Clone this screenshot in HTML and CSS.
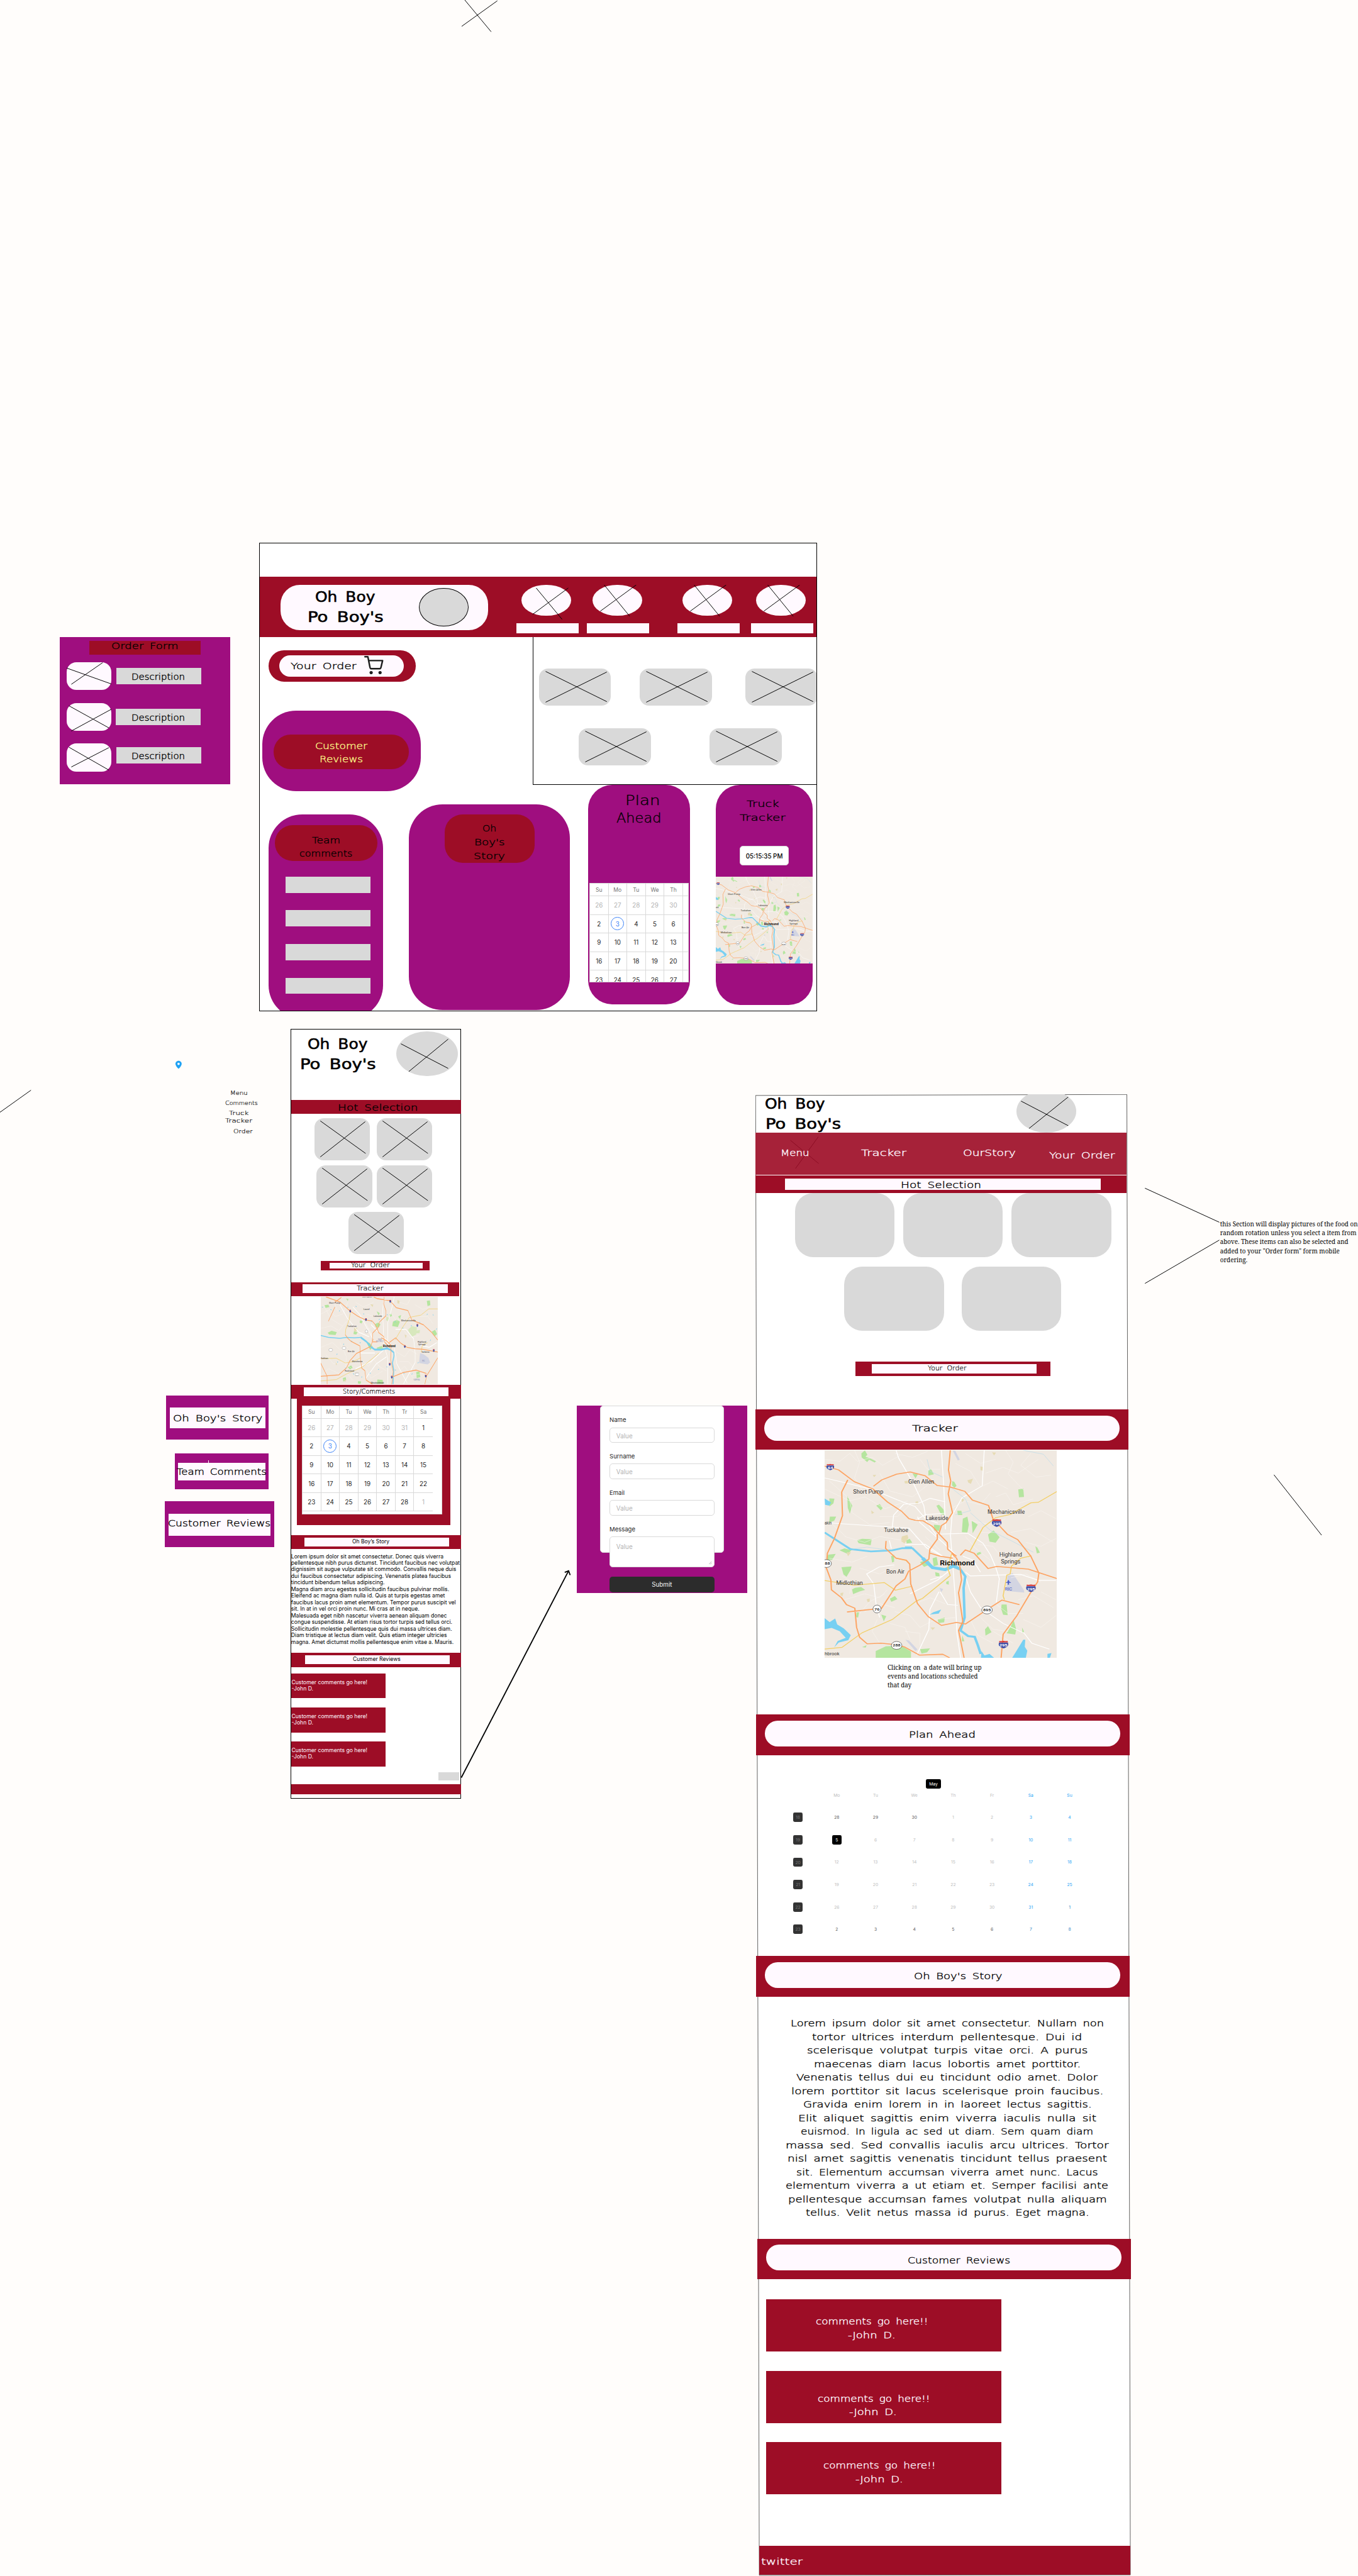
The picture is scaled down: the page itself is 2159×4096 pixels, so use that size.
FILE: index.html
```html
<!DOCTYPE html>
<html lang="en">
<head>
<meta charset="utf-8">
<title>Oh Boy Po Boy's wireframes</title>
<link rel="stylesheet" href="styles.css">
</head>
<body>
<svg class="defs" width="0" height="0" aria-hidden="true">
  <symbol id="x-card" viewBox="0 0 186 95" preserveAspectRatio="none"><path class="hair" d="M17 7.5 175 85.5M175 9 17 87"/></symbol>
  <symbol id="x-tile" viewBox="0 0 143 109"><path class="hair" d="M15 7 132 91M131 9 15 100"/></symbol>
  <symbol id="x-nav" viewBox="0 0 128 81"><path class="hair" d="M30 0 96 81M113 0 20 68"/></symbol>
  <symbol id="interstate" viewBox="0 0 40 38"><path fill="#3f4da5" d="M3 9h34c5 15-2 22-17 29C5 31-2 24 3 9z"/><path fill="#d63232" d="M3 8c1-3 0-5 1-7 5 2 10 1 16-1 6 2 11 3 16 1 1 2 0 4 1 7z"/></symbol>
  <symbol id="map-wide" viewBox="321 284 923 1050" preserveAspectRatio="none">
    <rect x="321" y="284" width="923" height="1050" fill="#f0e9e1"/>
    <g fill="#b5e59f">
      <path d="M467 300l14-15 10 22-8 10 20 8 22 15-5 6-22-14-8 12-22-24zM670 402l22 2-10 22zM733 388l10-10 12 28-22 6zM828 440l8 4 9 20-8 10-10-12zM1090 482l20-4 3 42-20 2zM526 564l14-8 12 20-8 12zM411 515l12 30 8 20-10 40-8-30zM340 527l20 2-4 24-16 16zM342 620l25 0-8 20-20 10zM450 740l20-8 38 2-4 30-48-10zM755 660l26 4-6 28-18-2zM870 630l18-10 6 40-6 40-22-2zM905 640l24 20-20 44zM970 710l22-20 24 34-16 28-24-6zM645 740l14-8 10 20-22 4zM380 790l20-10 28 10-16 18zM335 812l30-4-14 30-20 2zM585 820l12-8 0 36-8 4zM388 876l40-4-4 18-16 34-12-12zM430 988l12-8 24-4 16 14-22 8-26 14zM700 850l30-14 14 24-28 14zM750 830l16-6 6 40-18 8zM760 900l16 6 2 16-16-2zM765 565l10-6 18 24 4 28-14-4zM848 590l16 0 4 22-18 0zM925 805l14-8 6 8-18 12zM1158 770l8 6 10 26-12 4zM580 1035l20-14 10 16-24 14zM546 1115l20 8-10 26zM448 1104l10 0-4 26-8-2zM770 1140l28-10-2 24-22 4zM804 950l10-6 0 20-10-4zM1024 1064l20 0 4 54-18-2-8-30zM1072 1144l10 46-4 26-34-6 14-30zM958 1190l12-16 14 30-24 18zM1105 1180l8 20-6 10zM524 1300l40-24 60-4 40 30 0 32-140 0zM700 1290l40-4-12 20-22 6zM868 1220l8 30-10 0zM470 1280l18-10-4 12z"/>
    </g>
    <g fill="#e6dbb4"><path d="M628 720l22-8 4 16-16 28-14-14zM888 436l22-8-8 26-10-6zM940 366l10 2 0 20-10-4zM986 294l16 2-8 14zM682 544l10-2 0 14-10 0zM864 530l12 2-8 16zM506 588l12 12-10 6zM638 440l14-2 0 14-12 0zM488 1038l12-4 0 16-8 2zM384 1006l12-2-4 18-8-4zM742 1180l18 0-10 14zM408 800l18 0-12 20zM512 410l14-2-8 12z"/></g>
    <path fill="#d3d5e2" d="M1048 912l20-6 44 84 2 14-72-8zM830 286l10 0 18 46-8 4zM642 1242l14 4 34 46-8 8zM778 980l14 6-8 16z"/>
    <g class="roads thin"><path d="M321 330l60 10 40-40 30 40 60-20 40 40 70-50M321 480l100 60 60-20 80 60 90-40M340 440l80 90 10 70 70 60 80-10M440 284l20 60-20 80 40 80M540 400l40 90 90 30 60-60M700 330l30 50 50 0M840 350l60 40 40 80 50-30 60 40M960 400l70-30 60 30 80-70M1000 520l40-20 30 60 80-30M1130 620l50-30 60 40M1060 700l80-20 90 70M1120 750l60 20 60-40M400 720l80 30 60-30 90 20M345 650l60 70M490 820l-60 30-90-20M460 880l80 30 60-40M400 1040l80-30 60 20 30-40M420 1010l10-60-40-30M530 1140l-20 60 30 60M480 1100l60-40 60 20M560 1010l-60 40-40 60M600 1100l60 20 40 60M580 1160l60 20 20 60M680 1060l60-30 60 30M700 1180l60-40 80-10M900 640l80 20 60-30M930 760l60 10 30 50 60-20M880 720l40 60 60 60M1060 930l60-20 60 40M1090 1040l60-20 80 60M940 1130l50 60 60 10M900 1140l30 80 60 40M1000 1060l50 50 60 0M990 1200l80 60M1110 1140l70 40 60-60M1180 1000l60 40M1000 700l-60 0M720 720l60 70M680 720l60 60M660 560l-50 60-70 0M820 580l60-40 60 20 40-60M640 1200l60 10 0 60M600 300l70 20 60-30M880 300l60 50 60-20M1040 284l30 60-20 60 60 80M1140 300l-40 60 60 60 60-10"/></g>
    <g class="roads"><path d="M321 424l80 24 110 35 100 52 70 34 40 60 50 24M605 284l10 40 60 130 40 110 10 80 40 70M785 284l10 200 6 200M690 620l10 30 90 100 50 60M321 650l260 22 75 6 70 100 60 40M590 672l5-60 40-55 60-5 45-25 60 18M955 284l-8 180-80 60-40 90-6 100 18 300 8 200 20 170M780 708l110-4 60 50 30 60 20 60 15 60-12 120M540 1130l-14-60-10-110-28-50 50-36 60-10M578 740l8 40M660 1010l110-70 50-50M740 940l50-20M780 1000l30 64 40 4M775 1000l-36 90-4 100-48 130M880 900l20 20 200-8 70 30 70 0M880 920l20 80 40 80 90 80 84 50 30 50 70 30M680 640l40-30 80-8M640 760l80 0 70 60M870 820l40 20 30 60"/></g>
    <path fill="none" stroke="#78d0f2" stroke-width="9" d="M321 700l102 84 82 12 85-6 40-11 40 1 45 55"/>
    <path fill="none" stroke="#78d0f2" stroke-width="15" d="M710 830l40 48 50 10 32-18 28 15"/>
    <path fill="none" stroke="#78d0f2" stroke-width="10" d="M858 882l22 40-7 58 4 150-16 66 30 28 26 4 12 40 12 46M640 776l28 0"/>
    <path fill="#78d0f2" d="M321 1133l20 20 22-18 8 30 26 20 28 34-10 26-38 12-18 24 14-32 32-16-24-34-32-16-28 6zM1066 1334l30-62 14-30 8 0-2 36 10 20-6 36zM942 1334l2-34 12 22 20-8 18 20zM1206 1334l0-20 16-4-6 24zM321 528l26 20-8 16-16-4zM736 1118l16-14 32-14-10 20-30 4z"/>
    <g fill="none" stroke="#bcdcea" stroke-width="2"><path d="M728 330l12 60 50 30M820 470l60 60 20 60-60 20M900 600l80 90 80 50 90 60M430 784l60-10 80 14M1110 284l80 20 40 60"/></g>
    <g class="yel" stroke-width="4"><path d="M1244 492l-74 55-30 3-42 30-38 28-60 17-50 50-53 122M321 943l119 24 118-14 44 39 66-20M321 1290l69-9 80-74 120-67 95-93 25-14 110-115-10-38 15-70M1142 818l-42 12-37 40-5 40-13 5-15 105 5 20M605 830l40 12 14 18"/></g>
    <g class="org" stroke-width="5"><path d="M321 364l55 19 63 60 74 37 58 66 56 47 29 37 24 8 32 3 38 29 23 34 35 46 2 35 35 35M515 466l33-32 59-29 54-11 59 19 48 49 52 8 58 22 30 44 64 27 18 69 58 78 40 26 52 84 32 85-5 45-26 50-56 120-55 95-8 119M820 284l-7 100 9 56-10 65 17 95-26 50-18 15-10 40M413 434l-24 61 3 120-32 115-28 75-4 75 18 60 2 50 40 40 20 35 33 18 7 97 12 50 30 33 55-3 62 8 33 12 57 40 93-4 28 18M410 1102l118-16 19-2 58-114 35-35 15-40 45-30 35-30 4-50 30-52-1-25M565 743l-2 37 42 50 40 10 14 20 4 100 27 100 42 65 53 45 60-15 35 8 86-73 59-48 70 23M860 815l20-27 35 17 55 77 35-10 125 13 114 48M825 805l20 25 13 40 7 70-12 65 17 145-17 45 22 139M737 803l43 17 50 10"/></g>
    <g class="place">
      <text x="653" y="454" textLength="103" lengthAdjust="spacingAndGlyphs">Glen Allen</text>
      <text x="434" y="504" textLength="120" lengthAdjust="spacingAndGlyphs">Short Pump</text>
      <text x="968" y="605" textLength="148" lengthAdjust="spacingAndGlyphs">Mechanicsville</text>
      <text x="722" y="638" textLength="90" lengthAdjust="spacingAndGlyphs">Lakeside</text>
      <text x="557" y="698" textLength="96" lengthAdjust="spacingAndGlyphs">Tuckahoe</text>
      <text x="1015" y="821" textLength="90" lengthAdjust="spacingAndGlyphs">Highland</text>
      <text x="1021" y="857" textLength="78" lengthAdjust="spacingAndGlyphs">Springs</text>
      <text x="566" y="906" textLength="72" lengthAdjust="spacingAndGlyphs">Bon Air</text>
      <text x="367" y="966" textLength="106" lengthAdjust="spacingAndGlyphs">Midlothian</text>
      <text x="321" y="660" textLength="28" lengthAdjust="spacingAndGlyphs" font-size="22">akin</text>
      <text x="321" y="1322" textLength="59" lengthAdjust="spacingAndGlyphs" font-size="24">hbrook</text>
      <text x="779" y="866" textLength="138" lengthAdjust="spacingAndGlyphs" class="city">Richmond</text>
      <text x="1037" y="993" textLength="29" lengthAdjust="spacingAndGlyphs" fill="#4a5cc5" font-size="24">RIC</text>
    </g>
    <path fill="#4a5cc5" d="M1049 941h4l1 7 7 5v2l-7-1-1 8 2 2h-8l2-2-1-8-7 1v-2l7-5z"/>
    <use href="#interstate" x="327" y="350" width="33" height="38"/><use href="#interstate" x="984" y="632" width="41" height="40"/><use href="#interstate" x="1120" y="962" width="41" height="40"/><use href="#interstate" x="1011" y="1247" width="41" height="40"/>
    <g fill="#fff" stroke="#444" stroke-width="2"><ellipse cx="328" cy="857" rx="20" ry="20"/><ellipse cx="529" cy="1087" rx="16" ry="20"/><ellipse cx="966" cy="1092" rx="21" ry="20"/><ellipse cx="607" cy="1271" rx="21" ry="20"/></g>
    <g class="num"><text class="inv" x="344" y="378">64</text><text class="inv" x="1005" y="662">295</text><text class="inv" x="1141" y="992">295</text><text class="inv" x="1031" y="1276">295</text><text x="332" y="864">88</text><text x="529" y="1094">76</text><text x="966" y="1099">895</text><text x="607" y="1278">288</text></g>
  </symbol>
  <symbol id="map-close" viewBox="291 1157 906 369" preserveAspectRatio="none">
    <rect x="291" y="1157" width="906" height="369" fill="#f0e9e1"/>
    <path fill="#b5e59f" d="M345 1308l30-8 40 6-10 12-50-2zM320 1192l30-2 8 10-30 4zM712 1272l24-6 18 8-14 12-24-2zM850 1262l30-8 24 8-16 22-44-4zM890 1240l22-6-6 20zM1112 1174l24-2 4 20-22 4zM1150 1304l26-8 16 18-20 10zM1030 1474l26-2 6 24-28 4zM640 1344l30 8 24 16-20 14zM724 1372l40-8 12 14-44 4zM500 1454l26-8 12 10-20 8zM462 1500l22-4 4 12-22 6zM548 1302l28 4-10 10-22-2zM486 1164l20 2-6 8zM724 1218l24 8-10 10zM580 1512l24 2-6 10-20-2zM820 1232l16-4 8 10-20 4zM730 1506l40 2 4 16-50 0zM596 1256l20 4-10 10-14-4z"/>
    <path fill="#d8e8bd" d="M966 1296l30-16 40 6-6 30-36 10zM1010 1302l50-6-4 14-46 2zM800 1240l22 6-8 14-18-4z"/>
    <path fill="#e6dbb4" d="M550 1284l24 4-8 16-18-2zM884 1170l18 4-4 12-14-2zM674 1188l24 2-6 10zM940 1316l16 4-8 12zM468 1504l20 4-8 8zM404 1434l14 4-8 8z"/>
    <path fill="#d3d5e2" d="M1060 1394l30 6 34 14 14 20-20 8-66-6z"/>
    <g class="roads thin"><path d="M291 1230l70-20 40 30 60-10 40-50M310 1190l60 60 90 30M380 1157l40 60 60 0M291 1290l80-10 60 20 60-40M291 1370l90-20 60 30 60-10M330 1400l60 40 80-10 60 30M440 1350l50 60-10 60 60 40M291 1490l60-30 80 20M600 1420l60 30 40-30 60 40M640 1460l40 40 90-30M720 1440l80 30M880 1390l60 20 40-30 60 20M900 1430l70 0 60 40M880 1480l60-30 80 60M940 1230l-60 30-40-30M900 1180l60 10 30-30M1020 1190l60 20 60-10M1060 1240l60 0 40 30M920 1290l60 40 70-10M1070 1350l60 20 60-10M560 1180l60 20 80-20M640 1230l70 10 70-10M560 1320l80-20 60-20M640 1270l60 60M600 1230l90 90M1000 1490l80-10 60 40"/></g>
    <g class="roads"><path d="M435 1186l60 60 90 60 80 20M540 1200l50 30 100 100M780 1157l-10 60 10 140 30 60 0 109M860 1157l-20 50-30 60 0 100M680 1274l90 50 60 30M870 1294l80 0 60 40 12 60 0 40-60 60-30 30M860 1370l20 70 80 80M560 1460l120-30 120-60M640 1500l80-60 80-30M1050 1360l80 10 60-20M600 1394l110 0"/></g>
    <g fill="none" stroke="#78d0f2"><path stroke-width="4" d="M291 1320l60 8 88 4 52-4 60 2 50-2"/><path stroke-width="8" d="M600 1328l45 18 35 22 30 12 50 0 50-6"/><path stroke-width="7" d="M800 1374l30 6 26 12 2 14-12 30 10 30-6 60"/></g>
    <path fill="none" stroke="#78d0f2" stroke-width="3" stroke-dasharray="7 60" d="M300 1200l120 20 130-30 150 80 100-40 120 60 130-20 100-60 40 80-200 200-200-40-200 50-200-80 100-80 200 20"/>
    <g class="yel" stroke-width="2.5"><path d="M1197 1208l-70 0-60 26-90 10-60 48-50 46M520 1225l-10 30-26 40-2 20M291 1418l120-2 70 20 60-6 60-16M291 1512l120-6 80-24 120-28 130-60M1068 1390l10-30 40-10"/></g>
    <g class="org" stroke-width="3.5"><path d="M330 1157l110 22 78 38 60 22 60 16 50 4 20 12 20 20 10 16 40 18 8 24 40 22M700 1157l30 8 96 8 50 30 90 12 30 40 90 20 60 30 51 34M782 1157l-4 30 18 30 0 20-50 26-12 24-40 22-4 38 40 0M480 1316l20 16 24 12 70 20 4 54 10 40 24 10 10 40 50 18M291 1492l140-6 60-30 26-30 50-30 110-30 20-30M820 1350l50-20 40 22 50 18 60 6 60 2 117 12M760 1330l40 12 36 20-4 60 20 50-12 54M1197 1414l-40 36-46 40-14 36M850 1494l80-18 100-10 80 14M400 1200l-50 60M400 1180l50-20M290 1436l50 56 0 34"/></g>
    <g class="place small">
      <text x="354" y="1185" textLength="88" lengthAdjust="spacingAndGlyphs">Short Pump</text><text x="612" y="1160" textLength="76" lengthAdjust="spacingAndGlyphs">Glen Allen</text><text x="621" y="1214" textLength="48" lengthAdjust="spacingAndGlyphs">Laurel</text><text x="699" y="1241" textLength="66" lengthAdjust="spacingAndGlyphs">Lakeside</text><text x="914" y="1261" textLength="112" lengthAdjust="spacingAndGlyphs">Mechanicsville</text><text x="496" y="1284" textLength="72" lengthAdjust="spacingAndGlyphs">Tuckahoe</text><text x="1041" y="1350" textLength="66" lengthAdjust="spacingAndGlyphs">Highland</text><text x="1045" y="1361" textLength="58" lengthAdjust="spacingAndGlyphs">Springs</text><text x="1072" y="1392" textLength="62" lengthAdjust="spacingAndGlyphs">Sandston</text><text x="501" y="1390" textLength="53" lengthAdjust="spacingAndGlyphs">Bon Air</text><text x="292" y="1420" textLength="56" lengthAdjust="spacingAndGlyphs">llothian</text><text x="534" y="1432" textLength="82" lengthAdjust="spacingAndGlyphs">Manchester</text><text x="478" y="1473" textLength="72" lengthAdjust="spacingAndGlyphs">Rockwood</text><text x="678" y="1524" textLength="103" lengthAdjust="spacingAndGlyphs">Meadowbrook</text>
      <text x="772" y="1368" textLength="98" lengthAdjust="spacingAndGlyphs" class="city">Richmond</text>
      <text x="734" y="1340" textLength="28" lengthAdjust="spacingAndGlyphs" class="area-name">FAN</text><text x="718" y="1348" textLength="62" lengthAdjust="spacingAndGlyphs" class="area-name">DISTRICT</text><text x="1008" y="1511" textLength="50" lengthAdjust="spacingAndGlyphs" class="area-name">VARINA</text><text x="1077" y="1431" textLength="21" lengthAdjust="spacingAndGlyphs" class="area-name">RIC</text>
    </g>
    <use href="#interstate" x="507" y="1211" width="24" height="13"/><use href="#interstate" x="629" y="1247" width="24" height="13"/><use href="#interstate" x="815" y="1170" width="28" height="13"/><use href="#interstate" x="1025" y="1271" width="28" height="13"/><use href="#interstate" x="930" y="1360" width="24" height="13"/><use href="#interstate" x="1154" y="1377" width="24" height="13"/><use href="#interstate" x="813" y="1435" width="24" height="13"/><use href="#interstate" x="829" y="1489" width="24" height="13"/><use href="#interstate" x="1090" y="1485" width="28" height="13"/>
    <g fill="#fff" stroke="#555" stroke-width="1"><ellipse cx="645" cy="1303" rx="11" ry="6"/><ellipse cx="368" cy="1381" rx="15" ry="6"/><ellipse cx="471" cy="1373" rx="15" ry="6"/><rect x="559" y="1478" width="28" height="11"/></g>
  </symbol>
</svg>

<main class="board">

  <svg class="loose" viewBox="0 0 3506 6651" aria-hidden="true">
    <path class="hair" d="M1192 68 1284 2M1200 0 1268 82M0 2872 80 2815M2956 3068 3148 3156M2956 3314 3148 3202M3289 3808 3412 3964"/>
    <path fill="none" stroke="#000" stroke-width="3" d="M1191 4590 1468 4056M1458 4060l10-4 4 11"/>
    <path fill="#1fa2f4" d="M461 2739c5 0 8 4 8 8 0 6-8 13-8 13s-8-7-8-13c0-4 3-8 8-8z"/><circle cx="461" cy="2747" r="3" fill="#fff"/>
  </svg>

  <nav class="sitemap hand">
    <span class="s1"><span class="fit" data-fit="45">Menu</span></span>
    <span class="s2"><span class="fit" data-fit="84">Comments</span></span>
    <span class="s3"><span class="fit" data-fit="51">Truck</span></span>
    <span class="s4"><span class="fit" data-fit="70">Tracker</span></span>
    <span class="s5"><span class="fit" data-fit="50">Order</span></span>
  </nav>

  <!-- Order form -->
  <section class="order-form hand">
    <h2><span class="fit" data-fit="173">Order Form</span></h2>
    <div class="item"><svg viewBox="0 0 115 72"><path class="hair" d="M0 15 115 56M93 1 12 57"/></svg><p><span class="fit" data-fit="138">Description</span></p></div>
    <div class="item second"><svg viewBox="0 0 115 72"><path class="hair" d="M6 7 109 64M115 16 12 72"/></svg><p><span class="fit" data-fit="138">Description</span></p></div>
    <div class="item third"><svg viewBox="0 0 115 72"><path class="hair" d="M6 10 109 69M109 11 12 61"/></svg><p><span class="fit" data-fit="138">Description</span></p></div>
  </section>

  <!-- Desktop -->
  <section class="desktop hand">
    <header class="top">
      <div class="logo">
        <h1 class="brand"><span class="in"><span class="fit" data-fit="155">Oh Boy</span></span><span><span class="fit" data-fit="196">Po Boy's</span></span></h1>
        <div class="disc"></div>
      </div>
      <div class="link l1"><svg viewBox="0 0 128 81"><path class="hair" d="M38 8 105 89M121 8 29 76"/></svg><i></i></div>
      <div class="link l2"><svg><use href="#x-nav"/></svg><i></i></div>
      <div class="link l3"><svg><use href="#x-nav"/></svg><i></i></div>
      <div class="link l4"><svg><use href="#x-nav"/></svg><i></i></div>
    </header>
    <div class="middle">
      <div class="side">
        <div class="order-pill"><div class="inner"><span class="fit" data-fit="170">Your Order</span>
          <svg class="cart" viewBox="0 0 50 47" width="50" height="47"><path fill="none" stroke="#1e1e1e" stroke-width="4" stroke-linecap="round" stroke-linejoin="round" d="M2 2h7.500l5.500 27.500q.8 3.500 4 3.500h20q3.500 0 4.300-3.500L47.500 12H12"/><circle cx="18" cy="43" r="4.200" fill="#1e1e1e"/><circle cx="41" cy="43" r="4.200" fill="#1e1e1e"/></svg></div></div>
        <div class="review-card"><div class="pill"><p><span class="fit" data-fit="135">Customer</span></p><p><span class="fit" data-fit="112">Reviews</span></p></div></div>
      </div>
      <div class="menu">
        <div class="row r1"><svg><use href="#x-card"/></svg><svg><use href="#x-card"/></svg><svg><use href="#x-card"/></svg></div>
        <div class="row r2"><svg><use href="#x-card"/></svg><svg><use href="#x-card"/></svg></div>
      </div>
    </div>
    <div class="bottom">
      <div class="team"><div class="pill"><p><span class="fit" data-fit="73">Team</span></p><p><span class="fit" data-fit="137">comments</span></p></div><i></i><i></i><i></i><i></i></div>
      <div class="story"><div class="pill"><p><span class="fit" data-fit="36">Oh</span></p><p><span class="fit" data-fit="79">Boy's</span></p><p><span class="fit" data-fit="81">Story</span></p></div></div>
      <div class="plan"><p class="a"><span class="fit" data-fit="90">Plan</span></p><p class="b"><span class="fit" data-fit="116">Ahead</span></p>
        <div class="cal cut">
          <b>Su</b><b>Mo</b><b>Tu</b><b>We</b><b>Th</b><b></b><b></b>
          <s>26</s><s>27</s><s>28</s><s>29</s><s>30</s><s></s><s></s>
          <span>2</span><span class="today">3</span><span>4</span><span>5</span><span>6</span><span></span><span></span>
          <span>9</span><span>10</span><span>11</span><span>12</span><span>13</span><span></span><span></span>
          <span>16</span><span>17</span><span>18</span><span>19</span><span>20</span><span></span><span></span>
          <span>23</span><span>24</span><span>25</span><span>26</span><span>27</span><span></span><span></span>
        </div>
      </div>
      <div class="truck"><p><span class="fit" data-fit="84">Truck</span></p><p><span class="fit" data-fit="118">Tracker</span></p>
        <time>05:15:35 PM</time>
        <svg class="map"><use href="#map-wide"/></svg>
      </div>
    </div>
  </section>

  <!-- Tags -->
  <div class="tag t1 hand"><p><span class="fit" data-fit="231">Oh Boy's Story</span></p></div>
  <div class="tag t2 hand"><i></i><p><span class="fit" data-fit="232">Team Comments</span></p></div>
  <div class="tag t3 hand"><p><span class="fit" data-fit="265">Customer Reviews</span></p></div>

  <!-- Phone -->
  <section class="phone hand">
    <header>
      <h1 class="brand"><span class="in"><span class="fit" data-fit="155">Oh Boy</span></span><span><span class="fit" data-fit="196">Po Boy's</span></span></h1>
      <svg viewBox="0 0 158 116"><path class="hair" d="M12 32 134 95.500M134 20 32 104"/></svg>
    </header>
    <h2 class="hot"><span class="fit" data-fit="207">Hot Selection</span></h2>
    <div class="tiles a"><svg><use href="#x-tile"/></svg><svg><use href="#x-tile"/></svg></div>
    <div class="tiles b"><svg><use href="#x-tile"/></svg><svg><use href="#x-tile"/></svg></div>
    <div class="tiles c"><svg><use href="#x-tile"/></svg></div>
    <div class="bar order"><p><span class="fit" data-fit="100">Your Order</span></p></div>
    <div class="bar tracker"><p><span class="fit" data-fit="69">Tracker</span></p></div>
    <svg class="map"><use href="#map-close"/></svg>
    <div class="bar comments"><p><span class="fit" data-fit="135">Story/Comments</span></p></div>
    <div class="cal-block"><div class="cal-card"><div class="cal">
      <b>Su</b><b>Mo</b><b>Tu</b><b>We</b><b>Th</b><b>Tr</b><b>Sa</b>
      <s>26</s><s>27</s><s>28</s><s>29</s><s>30</s><s>31</s><span>1</span>
      <span>2</span><span class="today">3</span><span>4</span><span>5</span><span>6</span><span>7</span><span>8</span>
      <span>9</span><span>10</span><span>11</span><span>12</span><span>13</span><span>14</span><span>15</span>
      <span>16</span><span>17</span><span>18</span><span>19</span><span>20</span><span>21</span><span>22</span>
      <span>23</span><span>24</span><span>25</span><span>26</span><span>27</span><span>28</span><s>1</s>
    </div></div></div>
    <div class="bar plain storybar"><p><span class="fit" data-fit="96">Oh Boy’s Story</span></p></div>
    <p class="copy">Lorem ipsum dolor sit amet consectetur. Donec quis viverra<br>pellentesque nibh purus dictumst. Tincidunt faucibus nec volutpat<br>dignissim sit augue vulputate sit commodo. Convallis neque duis<br>dui faucibus consectetur adipiscing. Venenatis platea faucibus<br>tincidunt bibendum tellus adipiscing.<br>Magna diam arcu egestas sollicitudin faucibus pulvinar mollis.<br>Eleifend ac magna diam nulla id. Quis at turpis egestas amet<br>faucibus lacus proin amet elementum. Tempor purus suscipit vel<br>sit. In at in vel orci proin nunc. Mi cras at in neque.<br>Malesuada eget nibh nascetur viverra aenean aliquam donec<br>congue suspendisse. At etiam risus tortor turpis sed tellus orci.<br>Sollicitudin molestie pellentesque quis dui massa ultrices diam.<br>Diam tristique at lectus diam velit. Quis etiam integer ultricies<br>magna. Amet dictumst mollis pellentesque enim vitae a. Mauris.</p>
    <div class="bar plain reviewbar"><p><span class="fit" data-fit="123">Customer Reviews</span></p></div>
    <div class="quotes">
      <blockquote>Customer comments go here!<br>-John D.</blockquote>
      <blockquote>Customer comments go here!<br>-John D.</blockquote>
      <blockquote>Customer comments go here!<br>-John D.</blockquote>
    </div>
    <div class="button"></div>
    <footer></footer>
  </section>

  <!-- Contact form -->
  <form class="contact">
    <div class="sheet">
      <label>Name</label><div class="field">Value</div>
      <label>Surname</label><div class="field">Value</div>
      <label>Email</label><div class="field">Value</div>
      <label>Message</label><div class="field area">Value<svg viewBox="0 0 8 8" width="8" height="8"><path d="M7 0 0 7M7 4 4 7" stroke="#888" fill="none"/></svg></div>
      <div class="submit">Submit</div>
    </div>
  </form>

  <!-- Tablet -->
  <section class="tablet hand">
    <svg class="outline" viewBox="0 0 969 3825"><path fill="#fff" stroke="#000" d="M.5 3 959 .5 968 3823 10 3824z"/></svg>
    <header>
      <h1 class="brand"><span class="oh"><span class="fit" data-fit="155">Oh Boy</span></span><span class="po"><span class="fit" data-fit="195">Po Boy's</span></span></h1>
      <svg viewBox="0 0 154 110"><path class="hair" d="M12 29 134 92.600M134 18 32 100"/></svg>
    </header>
    <nav>
      <svg viewBox="0 0 75 84"><path d="M1 10 74 70M73 1 14 83" stroke="#8a0b22" stroke-width="1.500" fill="none"/></svg>
      <span class="n1"><span class="fit" data-fit="74">Menu</span></span><span class="n2"><span class="fit" data-fit="117">Tracker</span></span><span class="n3"><span class="fit" data-fit="136">OurStory</span></span><span class="n4"><span class="fit" data-fit="170">Your Order</span></span>
    </nav>
    <div class="hot"><p><span class="fit" data-fit="208">Hot Selection</span></p></div>
    <div class="tiles a"><i></i><i></i><i></i></div>
    <div class="tiles b"><i></i><i></i></div>
    <div class="bar"><p><span class="fit" data-fit="100">Your Order</span></p></div>
    <div class="band b1"><p><span class="fit" data-fit="118">Tracker</span></p></div>
    <svg class="map"><use href="#map-wide"/></svg>
    <div class="note day"><span class="fit" data-fit="243">Clicking on&nbsp; a date will bring up</span><span class="fit" data-fit="233">events and locations scheduled</span><span class="fit" data-fit="62">that day</span></div>
    <div class="band b2"><p><span class="fit" data-fit="172">Plan Ahead</span></p></div>
    <div class="month">May</div>
    <div class="weeks head"><b></b><span>Mo</span><span>Tu</span><span>We</span><span>Th</span><span>Fr</span><em>Sa</em><em>Su</em></div>
    <div class="weeks">
      <b>18</b><u>28</u><u>29</u><u>30</u><span>1</span><span>2</span><em>3</em><em>4</em>
      <b>19</b><strong>5</strong><span>6</span><span>7</span><span>8</span><span>9</span><em>10</em><em>11</em>
      <b>20</b><span>12</span><span>13</span><span>14</span><span>15</span><span>16</span><em>17</em><em>18</em>
      <b>21</b><span>19</span><span>20</span><span>21</span><span>22</span><span>23</span><em>24</em><em>25</em>
      <b>22</b><span>26</span><span>27</span><span>28</span><span>29</span><span>30</span><em>31</em><em class="off">1</em>
      <b>23</b><u>2</u><u>3</u><u>4</u><u>5</u><u>6</u><em class="off">7</em><em class="off">8</em>
    </div>
    <div class="band b3"><p><span class="fit" data-fit="228">Oh Boy's Story</span></p></div>
    <div class="lorem">
      <p><span class="fit" data-fit="809">Lorem ipsum dolor sit amet consectetur. Nullam non</span></p>
      <p><span class="fit" data-fit="697">tortor ultrices interdum pellentesque. Dui id</span></p>
      <p><span class="fit" data-fit="725">scelerisque volutpat turpis vitae orci. A purus</span></p>
      <p><span class="fit" data-fit="689">maecenas diam lacus lobortis amet porttitor.</span></p>
      <p><span class="fit" data-fit="778">Venenatis tellus dui eu tincidunt odio amet. Dolor</span></p>
      <p><span class="fit" data-fit="806">lorem porttitor sit lacus scelerisque proin faucibus.</span></p>
      <p><span class="fit" data-fit="745">Gravida enim lorem in in laoreet lectus sagittis.</span></p>
      <p><span class="fit" data-fit="770">Elit aliquet sagittis enim viverra iaculis nulla sit</span></p>
      <p><span class="fit" data-fit="755">euismod. In ligula ac sed ut diam. Sem quam diam</span></p>
      <p><span class="fit" data-fit="834">massa sed. Sed convallis iaculis arcu ultrices. Tortor</span></p>
      <p><span class="fit" data-fit="825">nisl amet sagittis venenatis tincidunt tellus praesent</span></p>
      <p><span class="fit" data-fit="779">sit. Elementum accumsan viverra amet nunc. Lacus</span></p>
      <p><span class="fit" data-fit="833">elementum viverra a ut etiam et. Semper facilisi ante</span></p>
      <p><span class="fit" data-fit="823">pellentesque accumsan fames volutpat nulla aliquam</span></p>
      <p><span class="fit" data-fit="732">tellus. Velit netus massa id purus. Eget magna.</span></p>
    </div>
    <div class="band b4"><p><span class="fit" data-fit="265">Customer Reviews</span></p></div>
    <div class="quotes">
      <blockquote class="q1"><span class="fit" data-fit="290">comments go here!!</span><span class="fit by" data-fit="123">-John D.</span></blockquote>
      <blockquote class="q2"><span class="fit" data-fit="290">comments go here!!</span><span class="fit by" data-fit="123">-John D.</span></blockquote>
      <blockquote class="q3"><span class="fit" data-fit="290">comments go here!!</span><span class="fit by" data-fit="123">-John D.</span></blockquote>
    </div>
    <footer><span class="fit" data-fit="107">twitter</span></footer>
  </section>

  <aside class="note feed">this Section will display pictures of the food on<br>random rotation unless you select a item from<br>above. These items can also be selected and<br>added to your "Order form" form mobile<br>ordering.</aside>
</main>
<script src="fit.js"></script>
</body>
</html>
```
FILE: styles.css
```css
*{box-sizing:border-box}
body{margin:0;background:#fffdfb;overflow:hidden}
h1,h2,p,blockquote{margin:0;font-weight:inherit;font-size:inherit}
i,em,s,u,b,strong{font-style:normal;font-weight:inherit;text-decoration:none}
svg{display:block}
.defs{position:absolute}
.board{position:relative;width:3506px;height:6651px;overflow:hidden;zoom:.6158;color:#000;font-family:Inter,"Liberation Sans",sans-serif}
.hair{fill:none;stroke:#000;stroke-width:1.6}
.hand{font-family:"DejaVu Sans",sans-serif;font-weight:200;font-size:24px;line-height:35px;word-spacing:.22em}
.hand .fit{-webkit-text-stroke:.6px currentColor}
.fit{display:inline-block;white-space:nowrap;transform-origin:0 50%}
.brand{font-size:38px;line-height:52px;font-weight:400;word-spacing:.2em}
.brand .fit{-webkit-text-stroke-width:1px}
.brand>span{display:block;height:52px}
.brand .in{padding-left:20px}
.roads{fill:none;stroke:#fff;stroke-width:3.5}
.roads.thin{stroke-width:1.6;stroke:#faf7f3}
.org{fill:none;stroke:#fda463;stroke-linejoin:round}
.yel{fill:none;stroke:#f3cf67}
.place{font:28px Roboto,sans-serif;fill:#333;stroke:none;word-spacing:0}
.place.small{font-size:11px}
.place .city{font-weight:700;font-size:1.25em;fill:#111}
.area-name{font-size:9px;fill:#8d93b8}
.num{font:bold 18px Roboto,sans-serif;text-anchor:middle;fill:#333}
.num .inv{fill:#fff}
.loose{position:absolute;inset:0;width:3506px;height:6651px}

.sitemap{position:absolute;left:581px;top:2812px;width:90px;display:flex;flex-direction:column;font-size:15px;line-height:20px}
.sitemap>span{height:20px}
.sitemap .fit{-webkit-text-stroke-width:.3px}
.s1{margin:0 0 6px 14px}.s2{margin-bottom:6px}.s3{margin-left:10px}.s5{margin:7px 0 0 21px}

/* order form */
.order-form{position:absolute;left:154px;top:1645px;width:440px;height:380px;background:#9f0e7f}
.order-form h2{width:288px;height:36px;margin:9px 0 20px 76px;background:#9d0d26;padding-left:57px;line-height:27px}
.item{display:flex;align-items:flex-start;height:72px;margin:0 0 33px 18px}
.item svg{width:115px;height:72px;background:#fff9ff;border-radius:25px;flex:none;overflow:visible}
.item p{width:219px;height:42px;margin:15px 0 0 13px;padding-left:40px;background:#d9d9d9;line-height:46px;font-size:22px}
.item.second p{margin-left:12px}
.item.third p{margin-top:10px}

/* desktop */
.desktop{position:absolute;left:669px;top:1401px;width:1440px;height:1210px;border:1px solid #000;background:#fff;display:flex;flex-direction:column;overflow:hidden}
.desktop>*{flex:none}
.top{margin-top:87px;height:156px;background:#9d0d26;display:flex;align-items:flex-start;padding:20px 0 0 54px}
.logo{width:536px;height:118px;border-radius:50px;background:#fff9ff;display:flex;padding:0 0 0 69px;margin-right:72px;flex:none}
.logo .brand{width:288px;padding-top:5px}
.disc{width:128px;height:100px;margin-top:8px;border:1px solid #000;border-radius:50%;background:#d9d9d9}
.link{width:161px;flex:none}
.link svg{width:128px;height:81px;margin:0 0 19px 14px;border-radius:50%;background:#fff9ff;overflow:visible}
.link i{display:block;height:26px;background:#fff9ff}
.l1{margin-right:22px}.l2{margin-right:72px}.l3{margin-right:29px}
.middle{display:flex;height:381px}
.side{width:705px;flex:none}
.order-pill{width:380px;height:80px;margin:34px 0 75px 22px;padding:12px 28px;border-radius:40px;background:#9d0d26}
.order-pill .inner{height:56px;border-radius:28px;background:#fff9ff;display:flex;padding-left:30px;align-items:center;width:322px}
.cart{margin:-6px 0 0 20px;flex:none}
.review-card{width:409px;height:209px;margin-left:6px;padding:63px 0 0 30px;border-radius:87px;background:#9f0e7f;position:relative}
.pill{background:#9d0d26;text-align:center}
.review-card .pill{width:349px;height:89px;border-radius:44px;padding-top:10px;color:#fbf587}
.menu{flex:1;border:solid #000;border-width:0 0 1px 1px;padding-top:81px}
.row{display:flex}
.row svg{width:186px;height:95px;background:#d9d9d9;border-radius:24px;flex:none}
.r1{padding-left:14px;gap:75px}.r1 svg:last-child{margin-left:12px}
.r2{padding-left:117px;gap:152px;margin-top:59px}
.bottom{display:flex;align-items:flex-start}
.bottom>div{background:#9f0e7f;flex:none}
.team{width:297px;height:527px;margin:77px 0 0 22px;border-radius:87px;padding:27px 0 0 17px}
.team .pill{width:264px;height:93px;border-radius:46px;padding-top:21px;margin-bottom:40px}
.team i{display:block;width:219px;height:42px;background:#d9d9d9;margin:0 0 45px 28px}
.story{width:416px;height:530px;margin:51px 0 0 66px;border-radius:87px;padding:26px 92px 0}
.story .pill{height:124px;border-radius:46px;padding-top:18px}
.plan{width:263px;height:567px;margin-left:47px;border-radius:62px;padding:18px 0 0 3px;font-size:33px;line-height:46px}
.plan p{height:46px}
.plan .a{padding-left:93px}.plan .b{padding-left:70px}
.cal{display:grid;grid-template-columns:repeat(7,48px);grid-template-rows:32px repeat(5,48px);width:336px;background:#fff;font:400 16px Inter,sans-serif;word-spacing:0;color:#1e1e1e}
.cal>*{display:flex;align-items:center;justify-content:center;border:solid #d9d9d9;border-width:0 1px 1px 0}
.cal b{font-size:14px;color:#757575}
.cal s{color:#b3b3b3}
.cal>*:nth-child(7n){border-right:0}
.cal .today{position:relative;color:#3b82f6}
.cal .today::after{content:"";position:absolute;inset:6px;border:1px solid #3b82f6;border-radius:50%}
.cal.cut{width:257px;height:256px;margin-top:144px;border:1px solid #d9d9d9;overflow:hidden}
.truck{width:251px;height:569px;margin-left:66px;border-radius:62px;padding-top:31px;display:flex;flex-direction:column;align-items:center}
.truck p{margin-right:8px;height:35px}
.truck time{width:128px;height:51px;margin:56px 0 29px;border:1px solid #d9d9d9;border-radius:8px;background:#fff;font:500 16px/49px Inter,sans-serif;text-align:center;word-spacing:0}
.truck .map{width:251px;height:225px}

/* tags */
.tag{position:absolute;background:#9f0e7f}
.tag p{background:#fff9ff;white-space:nowrap}
.t1{left:429px;top:3604px;width:265px;height:113px;padding:30px 9px}
.t1 p{height:54px;padding-left:9px;line-height:54px}
.t2{left:451px;top:3753px;width:243px;height:93px;padding:25px 8px}
.t2 i{float:left;width:2px;height:6px;margin:-7px 0 0 78px;background:#fff9ff}
.t2 p{height:44px;line-height:47px}
.t2 .fit{margin-left:-3px}
.t3{left:426px;top:3876px;width:282px;height:119px;padding:32px 10px}
.t3 p{height:57px;line-height:50px}
.t3 .fit{margin-left:-2px}

/* phone */
.phone{position:absolute;left:751px;top:2656px;width:440px;height:1989px;border:1px solid #000;background:#fff;display:flex;flex-direction:column;align-items:flex-start}
.phone>*{flex:none}
.phone header{height:183px;width:438px;display:flex;padding:12px 0 0 22px}
.phone header svg{width:158px;height:116px;margin:-7px 0 0 53px;background:#d9d9d9;border-radius:50%}
.phone .brand{width:196px}
.phone .hot{width:438px;height:36px;padding:2px 0 0 120px;background:#9d0d26}
.phone .tiles{display:flex}
.phone .tiles svg{width:143px;height:109px;border-radius:24px;background:#d9d9d9}
.phone .a{margin:10px 0 14px 60px;gap:17px}
.phone .b{margin:0 0 10px 65px;gap:12px}
.phone .c{margin-left:147px}
.phone .bar{background:#9d0d26;width:437px;height:36px;padding-top:6px;font-size:16px}
.bar .fit{-webkit-text-stroke-width:.3px}
.phone .bar p{width:374px;height:23px;line-height:22px;background:#fff9ff}
.phone .order{width:282px;height:24px;margin:18px 0 31px 75px;padding:5px 0 0 23px}
.phone .order p{width:240px;height:15px;line-height:13px;padding-left:56px}
.phone .tracker{width:433px;padding-left:29px}
.tracker p{padding-left:139px}
.phone .map{width:302px;height:226px;margin:2px 0 2px 75px}
.comments{padding-left:31px}
.comments p{padding-left:102px}
.cal-block{width:396px;height:325px;margin:0 0 27px 14px;padding:17px 13px;background:#9d0d26}
.cal-card{width:362px;height:281px;background:#fff;border:1px solid #d9d9d9}
.phone .plain{font:14px Inter,sans-serif;word-spacing:0}
.plain .fit{-webkit-text-stroke-width:0}
.storybar{padding-left:33px}.reviewbar{padding-left:35px}
.plain p{padding-left:123px}
.copy{margin:10px 0 20px -1px;font:14px/17px Inter,sans-serif;word-spacing:0;white-space:nowrap}
.phone .reviewbar{width:438px}
.phone .quotes{margin-top:17px}
.phone blockquote{width:243px;height:64px;margin-bottom:24px;padding-top:14px;background:#9d0d26;color:#fff9ff;font:14px/17px Inter,sans-serif;word-spacing:0}
.button{width:54px;height:21px;margin:-9px 0 10px 379px;background:#d9d9d9}
.phone footer{width:438px;height:26px;background:#9d0d26}

/* contact */
.contact{position:absolute;left:1489px;top:3630px;width:440px;height:484px;padding-left:60px;background:#9f0e7f}
.sheet{width:320px;height:380px;padding:24px 23px;border:1px solid #d9d9d9;border-radius:8px;background:#fff;font-size:16px;color:#1e1e1e}
.sheet label{display:block;height:22px;line-height:22px;margin-bottom:8px;font-size:15.500px}
.field{height:40px;margin-bottom:24px;padding:0 16px;border:1px solid #d9d9d9;border-radius:8px;line-height:39px;color:#b3b3b3;background:#fff}
.area{height:80px;padding-top:4px;position:relative}
.area svg{position:absolute;right:5px;bottom:6px}
.submit{height:40px;border-radius:8px;background:#2c2c2c;color:#f5f5f5;line-height:40px;text-align:center}

/* tablet */
.tablet{position:absolute;left:1950px;top:2826px;width:969px;height:3825px;display:flex;flex-direction:column;align-items:flex-start}
.tablet>*{flex:none;position:relative}
.tablet .outline{position:absolute;left:0;top:0;width:969px;height:3825px}
.tablet header{height:99px;width:959px;display:flex;overflow:hidden}
.tablet .brand{width:674px;margin-top:-2px}
.oh{padding-left:24px}.po{padding-left:27px}
.tablet header svg{width:154px;height:110px;margin-top:-11px;border-radius:50%;background:#d9d9d9}
.tablet nav{width:959px;height:109px;margin-bottom:1px;padding-top:33px;display:flex;background:#a62239;color:#fff9ff}
.tablet nav svg{position:absolute;left:89px;top:9px;width:75px;height:84px}
.tablet nav>span{position:relative}
.n1{margin-left:65px}.n2{margin-left:134px}.n3{margin-left:146px}.n4{margin:7px 0 0 86px}
.tablet .hot{width:959px;height:46px;padding:9px 0 0 77px;background:#9d0d26}
.tablet .hot p{width:815px;height:29px;padding-left:298px;line-height:33px;background:#fff9ff}
.tablet .tiles{display:flex}
.tablet .tiles i{width:257px;height:166px;border-radius:47px;background:#d9d9d9}
.tablet .a{margin:0 0 23px 102px;gap:23px}
.tablet .b{margin:0 0 80px 230px;gap:46px}
.tablet .bar{width:503px;height:37px;margin:0 0 86px 259px;padding:7px 0 0 41px;background:#9d0d26;font-size:16px}
.tablet .bar p{width:427px;height:24px;padding-left:146px;line-height:22px;background:#fff9ff}
.band{width:964px;height:105px;padding:16px 0 0 23px;background:#9d0d26}
.band p{width:918px;height:66px;border-radius:33px;background:#fff9ff;line-height:66px}
.b1 p{padding-left:382px}
.b2{margin-left:2px}.b2 p{padding-left:372px;line-height:73px}
.b3{margin:40px 0 51px 2px}.b3 p{padding-left:385px;line-height:72px}
.b4{margin:50px 0 52px 5px}.b4 p{padding-left:365px;line-height:82px}
.tablet .map{width:600px;height:536px;margin:1px 0 0 179px}
.note{font:16px/23px "Noto Serif","DejaVu Serif",serif;word-spacing:0}
.day{display:flex;flex-direction:column;align-items:flex-start;height:69px;margin:13px 0 64px 341px}
.day .fit{-webkit-text-stroke-width:0}
.month{width:38px;height:24px;margin:62px 0 7px 441px;border-radius:4px;background:#000;color:#fff;font:11px/25px Inter,sans-serif;text-align:center}
.weeks{display:grid;grid-template-columns:repeat(8,100.2px);grid-auto-rows:57.85px;margin-left:60px;place-items:center;font:11px Inter,sans-serif;word-spacing:0;color:#bdbdbd}
.weeks.head{grid-auto-rows:20px;margin-bottom:19px}
.weeks em{color:#2aa5f5}
.weeks u{color:#5a5a5a}
.weeks .off{color:#2f86c4}
.weeks b,.weeks strong{width:24px;height:24px;border-radius:4px;background:#333;color:#777;line-height:25px;text-align:center}
.weeks.head b{background:none}
.weeks strong{background:#000;color:#fff}
.lorem{width:911px;margin-left:40px;text-align:center;line-height:34.930px}
.lorem p{height:34.930px}
.tablet blockquote{width:608px;height:135px;margin:0 0 49px 28px;background:#9d0d26;color:#fff9ff;display:flex;flex-direction:column;align-items:flex-start}
.q1{padding:39px 0 0 129px}.q2{padding:54px 0 0 133px}.q3{padding:43px 0 0 148px}
.by{margin-left:82px}
.tablet footer{width:958px;height:74px;margin:85px 0 0 10px;padding-left:5px;line-height:82px;background:#9d0d26;color:#fff9ff}

.feed{position:absolute;left:3150px;top:3149px;white-space:nowrap}
```
FILE: fit.js
```js
// Stretches each label to the width given in its data-fit attribute.
const board = document.querySelector('.board');
const unit = board.getBoundingClientRect().width / 3506;
const labels = [...document.querySelectorAll('.fit')];
const widths = labels.map(el => el.getBoundingClientRect().width / unit);
labels.forEach((el, n) => {
  const target = Number(el.dataset.fit);
  el.style.transform = `scaleX(${target / widths[n]})`;
  el.style.marginRight = `${target - widths[n]}px`;
});
```
